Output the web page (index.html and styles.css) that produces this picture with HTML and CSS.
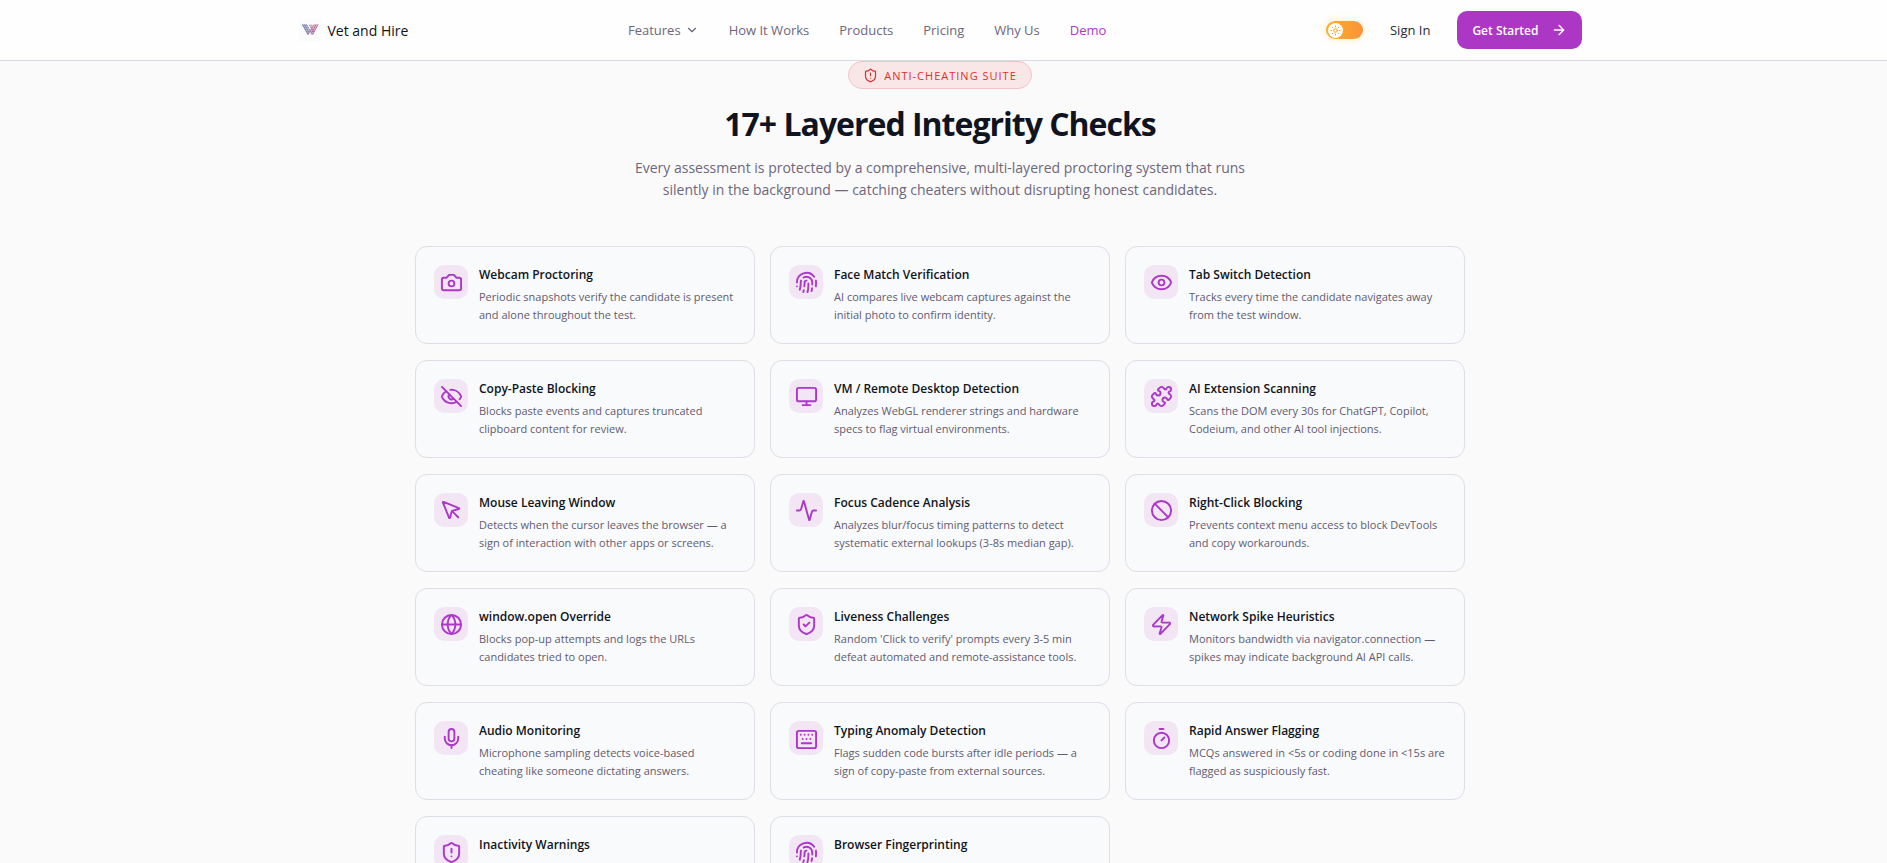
FILE: index.html
```html
<!DOCTYPE html>
<html lang="en">
<head>
    <meta charset="UTF-8">
    <meta name="viewport" content="width=device-width, initial-scale=1.0">
    <title>Vet and Hire</title>
    <link rel="stylesheet" href="styles.css">
</head>
<body>
    <header class="site-header">
        <div class="header-inner">
            <a class="brand" href="#">
                <svg class="logo" viewBox="0 0 22 22" fill="none">
                    <defs>
                        <linearGradient id="logoFill" x1="3" y1="0" x2="19" y2="0" gradientUnits="userSpaceOnUse">
                            <stop offset="0" stop-color="#3f6c9c"/>
                            <stop offset="0.5" stop-color="#8a6a9c"/>
                            <stop offset="1" stop-color="#d8527f"/>
                        </linearGradient>
                    </defs>
                    <rect width="22" height="22" fill="#fbfbfc"/>
                    <path d="M3 5.5H7.5L11 12L12.5 9L10.5 5.5H13L14.5 8L15.5 5.5H19.5L14 16H12.5L11 13L9.5 16H8.5Z" fill="url(#logoFill)" fill-opacity="0.45"/>
                    <path d="M3.5 5.5L9 15.5M5.5 5.5L10 14M7.5 5.5L13.5 15.5M10.5 6L14.5 13M19 5.5L13.5 15.5M17 5.5L12.5 14M15 5.5L9 15.5" stroke="url(#logoFill)" stroke-dasharray="1.6 0.7"/>
                </svg>
                <span>Vet and Hire</span>
            </a>
            <nav class="nav">
                <a href="#">Features
                    <svg class="chevron" viewBox="0 0 24 24"><path d="m6 9 6 6 6-6"/></svg>
                </a>
                <a href="#">How It Works</a>
                <a href="#">Products</a>
                <a href="#">Pricing</a>
                <a href="#">Why Us</a>
                <a class="active" href="#">Demo</a>
            </nav>
            <div class="actions">
                <button class="theme-toggle" type="button" aria-label="Toggle theme">
                    <span class="knob">
                        <svg viewBox="0 0 24 24"><circle cx="12" cy="12" r="4"/><path d="M12 2v2M12 20v2M4.93 4.93l1.41 1.41M17.66 17.66l1.41 1.41M2 12h2M20 12h2M6.34 17.66l-1.41 1.41M19.07 4.93l-1.41 1.41"/></svg>
                    </span>
                </button>
                <a class="sign-in" href="#">Sign In</a>
                <button class="get-started" type="button">Get Started
                    <svg viewBox="0 0 24 24"><path d="M5 12h14M12 5l7 7-7 7"/></svg>
                </button>
            </div>
        </div>
    </header>

    <main class="integrity">
        <div class="badge">
            <svg viewBox="0 0 24 24"><path d="M20 13c0 5-3.5 7.5-7.66 8.95a1 1 0 0 1-.67-.01C7.5 20.5 4 18 4 13V6a1 1 0 0 1 1-1c2 0 4.5-1.2 6.24-2.72a1.17 1.17 0 0 1 1.52 0C14.51 3.81 17 5 19 5a1 1 0 0 1 1 1z"/><path d="M12 8v4M12 16h.01"/></svg>
            <span>ANTI-CHEATING SUITE</span>
        </div>
        <h1>17+ Layered Integrity Checks</h1>
        <p class="intro">Every assessment is protected by a comprehensive, multi-layered proctoring system that runs silently in the background — catching cheaters without disrupting honest candidates.</p>

        <div class="grid">
            <article class="card">
                <div class="icon"><svg viewBox="0 0 24 24"><path d="M14.5 4h-5L7 7H4a2 2 0 0 0-2 2v9a2 2 0 0 0 2 2h16a2 2 0 0 0 2-2V9a2 2 0 0 0-2-2h-3l-2.5-3z"/><circle cx="12" cy="13" r="3"/></svg></div>
                <div class="card-text">
                    <h2>Webcam Proctoring</h2>
                    <p>Periodic snapshots verify the candidate is present and alone throughout the test.</p>
                </div>
            </article>
            <article class="card">
                <div class="icon"><svg viewBox="0 0 24 24"><path d="M12 10a2 2 0 0 0-2 2c0 1.02-.1 2.51-.26 4"/><path d="M14 13.12c0 2.38 0 6.38-1 8.88"/><path d="M17.29 21.02c.12-.6.43-2.3.5-3.02"/><path d="M2 12a10 10 0 0 1 18-6"/><path d="M2 16h.01"/><path d="M21.8 16c.2-2 .131-5.354 0-6"/><path d="M5 19.5C5.5 18 6 15 6 12a6 6 0 0 1 .34-2"/><path d="M8.65 22c.21-.66.45-1.32.57-2"/><path d="M9 6.8a6 6 0 0 1 9 5.2v2"/></svg></div>
                <div class="card-text">
                    <h2>Face Match Verification</h2>
                    <p>AI compares live webcam captures against the initial photo to confirm identity.</p>
                </div>
            </article>
            <article class="card">
                <div class="icon"><svg viewBox="0 0 24 24"><path d="M2.062 12.348a1 1 0 0 1 0-.696 10.75 10.75 0 0 1 19.876 0 1 1 0 0 1 0 .696 10.75 10.75 0 0 1-19.876 0"/><circle cx="12" cy="12" r="3"/></svg></div>
                <div class="card-text">
                    <h2>Tab Switch Detection</h2>
                    <p>Tracks every time the candidate navigates away from the test window.</p>
                </div>
            </article>
            <article class="card">
                <div class="icon"><svg viewBox="0 0 24 24"><path d="M10.733 5.076a10.744 10.744 0 0 1 11.205 6.575 1 1 0 0 1 0 .696 10.747 10.747 0 0 1-1.444 2.49"/><path d="M14.084 14.158a3 3 0 0 1-4.242-4.242"/><path d="M17.479 17.499a10.75 10.75 0 0 1-15.417-5.151 1 1 0 0 1 0-.696 10.75 10.75 0 0 1 4.446-5.143"/><path d="m2 2 20 20"/></svg></div>
                <div class="card-text">
                    <h2>Copy-Paste Blocking</h2>
                    <p>Blocks paste events and captures truncated clipboard content for review.</p>
                </div>
            </article>
            <article class="card">
                <div class="icon"><svg viewBox="0 0 24 24"><rect width="20" height="14" x="2" y="3" rx="2"/><path d="M8 21h8M12 17v4"/></svg></div>
                <div class="card-text">
                    <h2>VM / Remote Desktop Detection</h2>
                    <p>Analyzes WebGL renderer strings and hardware specs to flag virtual environments.</p>
                </div>
            </article>
            <article class="card">
                <div class="icon"><svg viewBox="0 0 24 24"><path d="M15.39 4.39a1 1 0 0 0 1.68-.474 2.5 2.5 0 1 1 3.014 3.015 1 1 0 0 0-.474 1.68l1.683 1.682a2.414 2.414 0 0 1 0 3.414L19.61 15.39a1 1 0 0 1-1.68-.474 2.5 2.5 0 1 0-3.014 3.015 1 1 0 0 1 .474 1.68l-1.683 1.682a2.414 2.414 0 0 1-3.414 0L8.61 19.61a1 1 0 0 0-1.68.474 2.5 2.5 0 1 1-3.014-3.015 1 1 0 0 0 .474-1.68l-1.683-1.682a2.414 2.414 0 0 1 0-3.414L4.39 8.61a1 1 0 0 1 1.68.474 2.5 2.5 0 1 0 3.014-3.015 1 1 0 0 1-.474-1.68l1.683-1.682a2.414 2.414 0 0 1 3.414 0z"/></svg></div>
                <div class="card-text">
                    <h2>AI Extension Scanning</h2>
                    <p>Scans the DOM every 30s for ChatGPT, Copilot, Codeium, and other AI tool injections.</p>
                </div>
            </article>
            <article class="card">
                <div class="icon"><svg viewBox="0 0 24 24"><path d="M12.586 12.586 19 19"/><path d="M3.688 3.037a.497.497 0 0 0-.651.651l6.5 15.999a.501.501 0 0 0 .947-.062l1.569-6.083a2 2 0 0 1 1.448-1.479l6.124-1.579a.5.5 0 0 0 .063-.947z"/></svg></div>
                <div class="card-text">
                    <h2>Mouse Leaving Window</h2>
                    <p>Detects when the cursor leaves the browser — a sign of interaction with other apps or screens.</p>
                </div>
            </article>
            <article class="card">
                <div class="icon"><svg viewBox="0 0 24 24"><path d="M22 12h-2.48a2 2 0 0 0-1.93 1.46l-2.35 8.36a.25.25 0 0 1-.48 0L9.24 2.18a.25.25 0 0 0-.48 0l-2.35 8.36A2 2 0 0 1 4.49 12H2"/></svg></div>
                <div class="card-text">
                    <h2>Focus Cadence Analysis</h2>
                    <p>Analyzes blur/focus timing patterns to detect systematic external lookups (3-8s median gap).</p>
                </div>
            </article>
            <article class="card">
                <div class="icon"><svg viewBox="0 0 24 24"><circle cx="12" cy="12" r="10"/><path d="m4.9 4.9 14.2 14.2"/></svg></div>
                <div class="card-text">
                    <h2>Right-Click Blocking</h2>
                    <p>Prevents context menu access to block DevTools and copy workarounds.</p>
                </div>
            </article>
            <article class="card">
                <div class="icon"><svg viewBox="0 0 24 24"><circle cx="12" cy="12" r="10"/><path d="M12 2a14.5 14.5 0 0 0 0 20 14.5 14.5 0 0 0 0-20"/><path d="M2 12h20"/></svg></div>
                <div class="card-text">
                    <h2>window.open Override</h2>
                    <p>Blocks pop-up attempts and logs the URLs candidates tried to open.</p>
                </div>
            </article>
            <article class="card">
                <div class="icon"><svg viewBox="0 0 24 24"><path d="M20 13c0 5-3.5 7.5-7.66 8.95a1 1 0 0 1-.67-.01C7.5 20.5 4 18 4 13V6a1 1 0 0 1 1-1c2 0 4.5-1.2 6.24-2.72a1.17 1.17 0 0 1 1.52 0C14.51 3.81 17 5 19 5a1 1 0 0 1 1 1z"/><path d="m9 12 2 2 4-4"/></svg></div>
                <div class="card-text">
                    <h2>Liveness Challenges</h2>
                    <p>Random 'Click to verify' prompts every 3-5 min defeat automated and remote-assistance tools.</p>
                </div>
            </article>
            <article class="card">
                <div class="icon"><svg viewBox="0 0 24 24"><path d="M4 14a1 1 0 0 1-.78-1.63l9.9-10.2a.5.5 0 0 1 .86.46l-1.92 6.02A1 1 0 0 0 13 10h7a1 1 0 0 1 .78 1.63l-9.9 10.2a.5.5 0 0 1-.86-.46l1.92-6.02A1 1 0 0 0 11 14z"/></svg></div>
                <div class="card-text">
                    <h2>Network Spike Heuristics</h2>
                    <p>Monitors bandwidth via navigator.connection — spikes may indicate background AI API calls.</p>
                </div>
            </article>
            <article class="card">
                <div class="icon"><svg viewBox="0 0 24 24"><path d="M12 19v3"/><path d="M19 10v2a7 7 0 0 1-14 0v-2"/><rect x="9" y="2" width="6" height="13" rx="3"/></svg></div>
                <div class="card-text">
                    <h2>Audio Monitoring</h2>
                    <p>Microphone sampling detects voice-based cheating like someone dictating answers.</p>
                </div>
            </article>
            <article class="card">
                <div class="icon"><svg viewBox="0 0 24 24"><rect width="20" height="18" x="2" y="4" rx="2"/><path d="M6 8h.01M10 8h.01M14 8h.01M18 8h.01M8 12.5h.01M12 12.5h.01M16 12.5h.01M7 17h10"/></svg></div>
                <div class="card-text">
                    <h2>Typing Anomaly Detection</h2>
                    <p>Flags sudden code bursts after idle periods — a sign of copy-paste from external sources.</p>
                </div>
            </article>
            <article class="card">
                <div class="icon"><svg viewBox="0 0 24 24"><path d="M10 2h4"/><path d="m12 14 3-3"/><circle cx="12" cy="14" r="8"/></svg></div>
                <div class="card-text">
                    <h2>Rapid Answer Flagging</h2>
                    <p>MCQs answered in &lt;5s or coding done in &lt;15s are flagged as suspiciously fast.</p>
                </div>
            </article>
            <article class="card">
                <div class="icon"><svg viewBox="0 0 24 24"><path d="M20 13c0 5-3.5 7.5-7.66 8.95a1 1 0 0 1-.67-.01C7.5 20.5 4 18 4 13V6a1 1 0 0 1 1-1c2 0 4.5-1.2 6.24-2.72a1.17 1.17 0 0 1 1.52 0C14.51 3.81 17 5 19 5a1 1 0 0 1 1 1z"/><path d="M12 8v4M12 16h.01"/></svg></div>
                <div class="card-text">
                    <h2>Inactivity Warnings</h2>
                    <p>Warns at 60s, alerts at 120s of inactivity throughout&nbsp;the test.</p>
                </div>
            </article>
            <article class="card">
                <div class="icon"><svg viewBox="0 0 24 24"><path d="M12 10a2 2 0 0 0-2 2c0 1.02-.1 2.51-.26 4"/><path d="M14 13.12c0 2.38 0 6.38-1 8.88"/><path d="M17.29 21.02c.12-.6.43-2.3.5-3.02"/><path d="M2 12a10 10 0 0 1 18-6"/><path d="M2 16h.01"/><path d="M21.8 16c.2-2 .131-5.354 0-6"/><path d="M5 19.5C5.5 18 6 15 6 12a6 6 0 0 1 .34-2"/><path d="M8.65 22c.21-.66.45-1.32.57-2"/><path d="M9 6.8a6 6 0 0 1 9 5.2v2"/></svg></div>
                <div class="card-text">
                    <h2>Browser Fingerprinting</h2>
                    <p>Captures device, browser, and OS details to detect shared or switched machines.</p>
                </div>
            </article>
        </div>
    </main>
</body>
</html>
```
FILE: styles.css
```css
* {
    box-sizing: border-box;
}

body {
    margin: 0;
    background-color: #fafafa;
    color: #0f1420;
    font-family: "Open Sans", "Noto Sans", sans-serif;
}

h1, h2, p {
    margin: 0;
}

a {
    color: inherit;
    text-decoration: none;
}

button {
    border: none;
    font-family: inherit;
    cursor: pointer;
}

svg {
    display: block;
    fill: none;
    stroke: currentColor;
    stroke-width: 2;
    stroke-linecap: round;
    stroke-linejoin: round;
}

/* header */
.site-header {
    position: sticky;
    top: 0;
    background-color: #fefefe;
    border-bottom: 1px solid #dcdae4;
    padding-right: 7px;
}

.header-inner {
    display: flex;
    align-items: center;
    justify-content: space-between;
    max-width: 1283px;
    height: 60px;
    margin: 0 auto;
}

.brand {
    display: flex;
    align-items: center;
    gap: 7px;
    font-size: 14px;
    font-weight: 500;
}

.logo {
    width: 22px;
    height: 22px;
    stroke: none;
    stroke-width: 1;
    stroke-linecap: butt;
}

.nav {
    display: flex;
    gap: 30px;
    font-size: 13px;
    font-weight: 500;
    color: #6d667c;
}

.nav a {
    display: flex;
    align-items: center;
    gap: 4px;
}

.nav .active {
    color: #ad37c8;
}

.chevron {
    width: 14px;
    height: 14px;
}

.actions {
    display: flex;
    align-items: center;
}

.theme-toggle {
    width: 37px;
    height: 18px;
    padding: 2px;
    border-radius: 9px;
    background: linear-gradient(90deg, #fbb024, #fb923c);
    box-shadow: 0 0 8px rgba(251, 191, 36, 0.3);
}

.knob {
    display: flex;
    align-items: center;
    justify-content: center;
    width: 15px;
    height: 15px;
    border-radius: 50%;
    background-color: #fff;
    color: #f59e0b;
}

.knob svg {
    width: 11px;
    height: 11px;
}

.sign-in {
    margin: 0 27px;
    font-size: 13px;
    font-weight: 500;
    color: #262a36;
}

.get-started {
    display: flex;
    align-items: center;
    gap: 12px;
    height: 38px;
    padding: 0 15px;
    border-radius: 10px;
    background-color: #ad37c5;
    color: #fff;
    font-size: 12px;
    font-weight: 600;
}

.get-started svg {
    width: 16px;
    height: 16px;
}

/* integrity checks */
.integrity {
    display: flex;
    flex-direction: column;
    align-items: center;
    padding: 0 7px 80px 0;
}

.badge {
    display: flex;
    align-items: center;
    gap: 6px;
    height: 28px;
    padding: 0 14px;
    border: 1px solid #f5c2c4;
    border-radius: 14px;
    background-color: #f9e6e6;
    color: #e03030;
    font-size: 11px;
    letter-spacing: 1px;
}

.badge svg {
    width: 15px;
    height: 15px;
}

h1 {
    margin-top: 14px;
    font-size: 32px;
    line-height: 42px;
    font-weight: 700;
    letter-spacing: -1px;
}

.intro {
    max-width: 640px;
    margin: 12px 0 45px;
    font-size: 14px;
    line-height: 22px;
    text-align: center;
    color: #6d667c;
}

.grid {
    display: grid;
    grid-template-columns: repeat(3, 1fr);
    gap: 16px 15px;
    width: 100%;
    max-width: 1050px;
}

.card {
    display: flex;
    gap: 11px;
    padding: 18px 18px 19px;
    border: 1px solid #dfdde6;
    border-radius: 12px;
    background-color: #f9fafc;
}

.icon {
    display: flex;
    align-items: center;
    justify-content: center;
    flex-shrink: 0;
    width: 34px;
    height: 34px;
    border-radius: 10px;
    background-color: #f2e6f5;
    color: #ad37c8;
}

.icon svg {
    width: 23px;
    height: 23px;
}

.card h2 {
    margin-bottom: 4px;
    font-size: 12px;
    line-height: 19px;
    font-weight: 600;
}

.card p {
    font-size: 11px;
    line-height: 18px;
    color: #625b70;
}
```
